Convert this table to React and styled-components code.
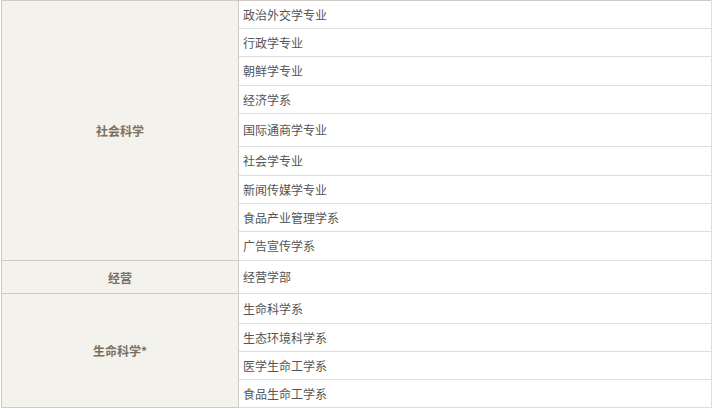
import React from 'react';
import styled, { createGlobalStyle } from 'styled-components';

const GlobalStyle = createGlobalStyle`
  html, body {
    margin: 0;
    padding: 0;
    background: #fff;
  }
  body {
    font-family: "Noto Sans CJK SC", "Liberation Sans", sans-serif;
  }
`;

const groups = [
  {
    name: '社会科学',
    majors: [
      ['政治外交学专业', 28],
      ['行政学专业', 28],
      ['朝鲜学专业', 29],
      ['经济学系', 28],
      ['国际通商学专业', 33],
      ['社会学专业', 29],
      ['新闻传媒学专业', 28],
      ['食品产业管理学系', 28],
      ['广告宣传学系', 29],
    ],
  },
  {
    name: '经营',
    majors: [['经营学部', 33]],
  },
  {
    name: '生命科学*',
    majors: [
      ['生命科学系', 30],
      ['生态环境科学系', 28],
      ['医学生命工学系', 28],
      ['食品生命工学系', 28],
    ],
  },
];

const Wrap = styled.div`
  padding-left: 1px;
  width: 712px;
`;

const Table = styled.table`
  width: 711px;
  border-collapse: collapse;
  table-layout: fixed;
  border: 1px solid #cfcac2;
  font-size: 12px;
`;

const Row = styled.tr`
  height: ${(p) => p.$h}px;
`;

const GroupCell = styled.th`
  width: 236px;
  background: #f4f2ed;
  color: #7a705f;
  font-weight: bold;
  text-align: center;
  vertical-align: middle;
  border: 1px solid #cfcac2;
  padding: 0;
`;

const MajorCell = styled.td`
  color: #555;
  padding: 0 0 0 4px;
  vertical-align: middle;
  border-bottom: 1px solid #dedede;
  border-right: 1px solid #dedede;
  line-height: 16px;
`;

export default function App() {
  return (
    <Wrap>
      <GlobalStyle />
      <Table>
        <tbody>
          {groups.map((g) =>
            g.majors.map(([major, h], i) => (
              <Row key={major} $h={h}>
                {i === 0 && (
                  <GroupCell rowSpan={g.majors.length}>{g.name}</GroupCell>
                )}
                <MajorCell>{major}</MajorCell>
              </Row>
            ))
          )}
        </tbody>
      </Table>
    </Wrap>
  );
}
